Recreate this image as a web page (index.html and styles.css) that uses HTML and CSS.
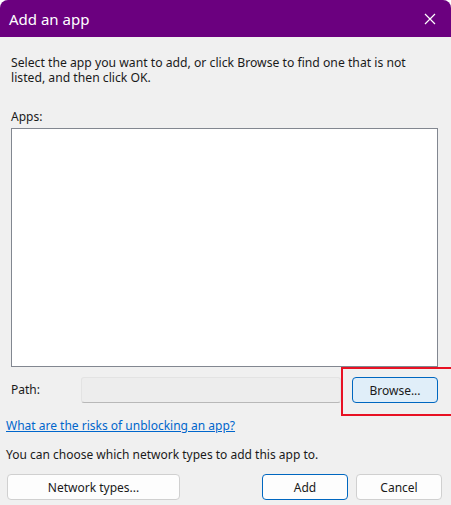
FILE: index.html
```html
<!DOCTYPE html>
<html lang="en">
<head>
    <meta charset="UTF-8">
    <title>Add an app</title>
    <link rel="stylesheet" href="styles.css">
</head>
<body>
    <div class="dialog">
        <div class="titlebar">
            <span class="title">Add an app</span>
            <svg class="close" width="12" height="12" viewBox="0 0 12 12">
                <path d="M1 1 L11 11 M11 1 L1 11" stroke="white" stroke-width="1.2" fill="none"/>
            </svg>
        </div>

        <div class="content">
            <p class="intro">Select the app you want to add, or click Browse to find one that is not listed, and then click OK.</p>

            <p class="label">Apps:</p>
            <div class="apps-list"></div>

            <div class="path-row">
                <span class="path-label">Path:</span>
                <div class="path-input"></div>
                <div class="highlight">
                    <button class="btn btn-browse">Browse...</button>
                </div>
            </div>
        </div>

        <div class="footer">
            <a class="risk-link" href="#">What are the risks of unblocking an app?</a>
            <p class="network-note">You can choose which network types to add this app to.</p>
            <div class="buttons">
                <button class="btn btn-network">Network types...</button>
                <div class="spacer"></div>
                <button class="btn btn-add">Add</button>
                <button class="btn btn-cancel">Cancel</button>
            </div>
        </div>
    </div>
</body>
</html>
```

FILE: styles.css
```css
body {
    margin: 0;
    background: white;
    font-family: "Noto Sans", "Open Sans", sans-serif;
    font-size: 12px;
    color: #1a1a1a;
}

.dialog {
    width: 451px;
    height: 505px;
    background: #f0f0f0;
    border-radius: 8px 8px 0 0;
    overflow: hidden;
    display: flex;
    flex-direction: column;
}

.titlebar {
    height: 37px;
    background: #6b007f;
    display: flex;
    align-items: center;
    justify-content: space-between;
    padding: 0 15px 0 9px;
    color: white;
}

.title {
    font-size: 15px;
    margin-top: 1px;
}

.close {
    margin-top: 1px;
}

.content {
    padding: 0 13px 0 11px;
}

.intro {
    margin: 18px 0 0 0;
    line-height: 15px;
    width: 420px;
    font-size: 12.2px;
}

.label {
    margin: 24px 0 0 0;
    line-height: 15px;
}

.apps-list {
    margin-top: 4px;
    height: 237px;
    background: white;
    border: 1px solid #828790;
}

.path-row {
    display: flex;
    align-items: center;
    height: 49px;
}

.path-label {
    width: 70px;
    margin-top: -4px;
}

.path-input {
    width: 258px;
    height: 24px;
    margin-top: -3px;
    background: #ededed;
    border: 1px solid #e3e3e3;
    border-bottom-color: #b8b8b8;
    border-radius: 3px;
}

.highlight {
    flex: 1;
    align-self: stretch;
    margin-right: -13px;
    border: 2px solid #e81123;
    border-right: none;
    padding: 8px 0 0 9px;
}

.btn {
    font-family: inherit;
    font-size: 12px;
    color: #1a1a1a;
    height: 26px;
    background: #fdfdfd;
    border: 1px solid #d0d0d0;
    border-radius: 4px;
    padding: 0;
}

.btn-browse {
    width: 86px;
    background: #e0eef9;
    border-color: #0067c0;
}

.footer {
    padding: 0 9px 0 7px;
}

.risk-link {
    display: block;
    margin: 2px 0 0 -1px;
    color: #0066cc;
    line-height: 15px;
}

.network-note {
    margin: 14px 0 0 -1px;
    line-height: 15px;
}

.buttons {
    display: flex;
    gap: 8px;
    margin-top: 12px;
}

.btn-network {
    width: 173px;
}

.spacer {
    flex: 1;
}

.btn-add {
    width: 86px;
    border-color: #0067c0;
}

.btn-cancel {
    width: 86px;
}
```
